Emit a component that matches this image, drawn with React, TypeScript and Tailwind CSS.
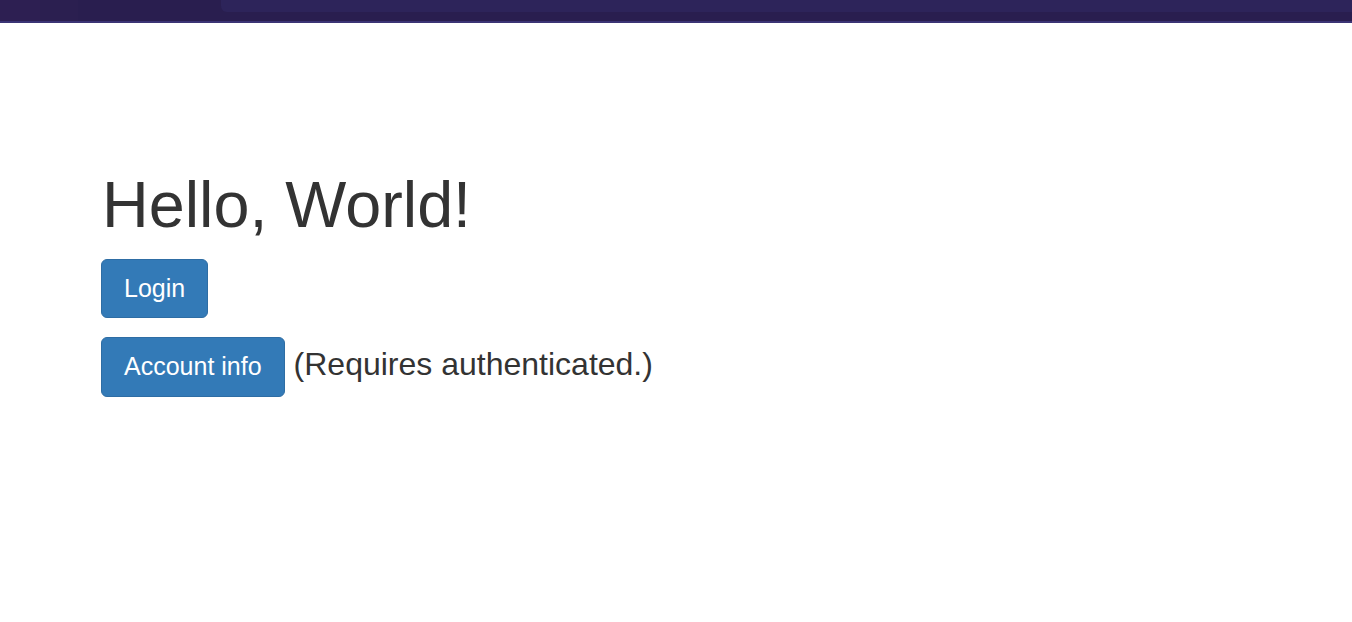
export default function App() {
  return (
    <div className="min-h-[622px] bg-white font-['Liberation_Sans',Arial,sans-serif] text-[#333]">
      {/* dark strip at the top of the window */}
      <div className="flex h-[21px] bg-[#291e4f]">
        <div className="w-[40px] bg-[#2d1f52]" />
        <div className="w-[38px] bg-[#2b1f50]" />
        <div className="w-[143px]" />
        <div className="h-[12px] flex-1 rounded-bl-[6px] bg-[#2d245a]" />
      </div>
      <div className="h-[2px] bg-[#3b3475]" />

      <div className="px-[101px] pt-[147px]">
        <h1 className="text-[64.7px] leading-[70px] ml-px">Hello, World!</h1>

        <div className="mt-[19px] flex flex-col gap-[19px]">
          <div>
            <button className="h-[59px] rounded-[6px] border border-[#2e6da4] bg-[#337ab7] px-[22px] text-[25px] text-white">
              Login
            </button>
          </div>
          <div className="flex items-baseline">
            <button className="h-[60px] rounded-[6px] border border-[#2e6da4] bg-[#337ab7] px-[22px] text-[25px] text-white">
              Account info
            </button>
            <span className="ml-[9px] text-[32px]">(Requires authenticated.)</span>
          </div>
        </div>
      </div>
    </div>
  );
}
